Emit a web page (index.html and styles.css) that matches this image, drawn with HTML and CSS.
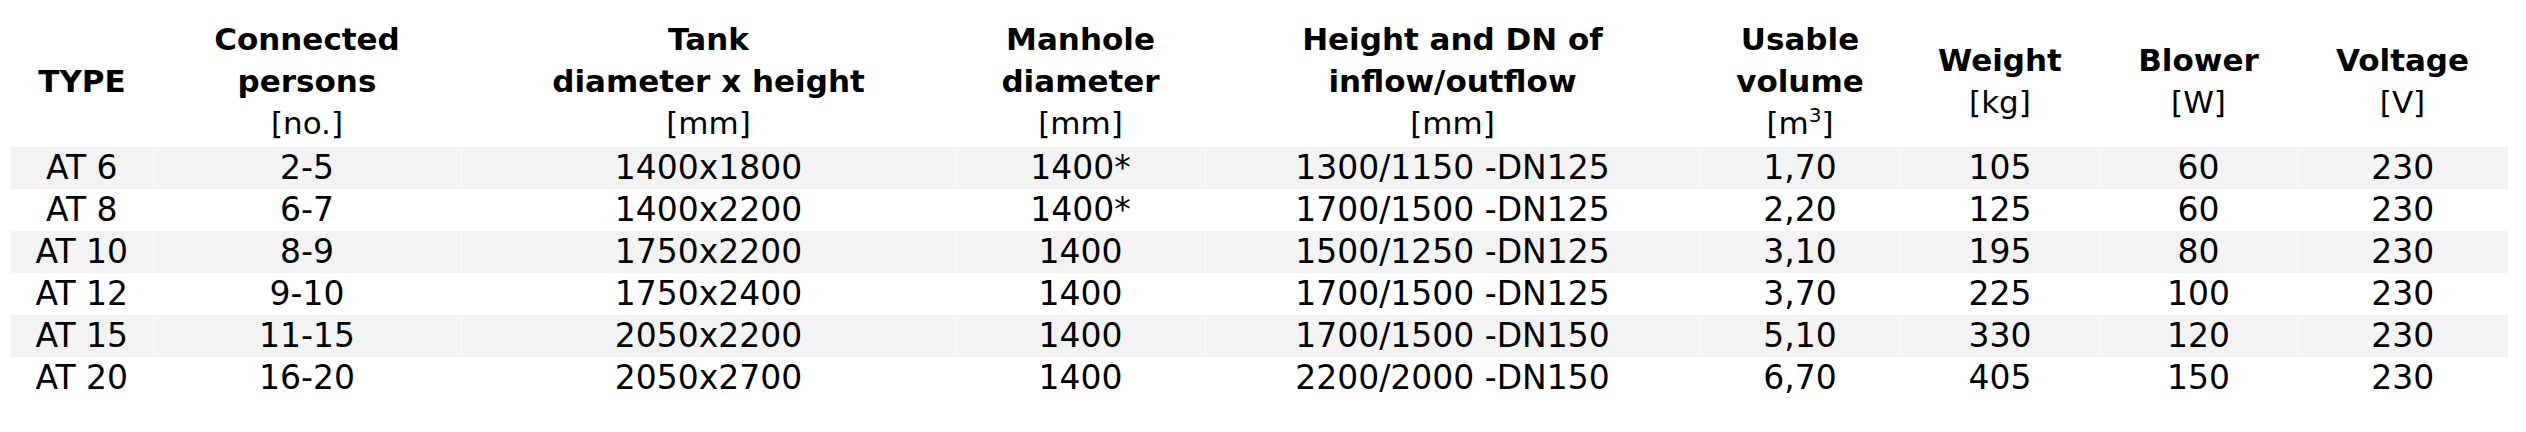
FILE: index.html
```html
<!DOCTYPE html>
<html lang="en">
<head>
<meta charset="utf-8">
<title>AT types</title>
<link rel="stylesheet" href="styles.css">
</head>
<body>
<table class="spec">
  <colgroup>
    <col class="c-type">
    <col class="c-persons">
    <col class="c-tank">
    <col class="c-manhole">
    <col class="c-flow">
    <col class="c-volume">
    <col class="c-weight">
    <col class="c-blower">
    <col class="c-voltage">
  </colgroup>
  <thead>
    <tr>
      <th><b>TYPE</b></th>
      <th><b>Connected<br>persons</b><br><span class="unit">[no.]</span></th>
      <th><b>Tank<br>diameter x height</b><br><span class="unit">[mm]</span></th>
      <th><b>Manhole<br>diameter</b><br><span class="unit">[mm]</span></th>
      <th><b>Height and DN of<br>inflow/outflow</b><br><span class="unit">[mm]</span></th>
      <th><b>Usable<br>volume</b><br><span class="unit">[m<sup class="sup">3</sup>]</span></th>
      <th><b>Weight</b><br><span class="unit">[kg]</span></th>
      <th><b>Blower</b><br><span class="unit">[W]</span></th>
      <th><b>Voltage</b><br><span class="unit">[V]</span></th>
    </tr>
  </thead>
  <tbody>
    <tr><td>AT 6</td><td>2-5</td><td>1400x1800</td><td>1400*</td><td>1300/1150 -DN125</td><td>1,70</td><td>105</td><td>60</td><td>230</td></tr>
    <tr><td>AT 8</td><td>6-7</td><td>1400x2200</td><td>1400*</td><td>1700/1500 -DN125</td><td>2,20</td><td>125</td><td>60</td><td>230</td></tr>
    <tr><td>AT 10</td><td>8-9</td><td>1750x2200</td><td>1400</td><td>1500/1250 -DN125</td><td>3,10</td><td>195</td><td>80</td><td>230</td></tr>
    <tr><td>AT 12</td><td>9-10</td><td>1750x2400</td><td>1400</td><td>1700/1500 -DN125</td><td>3,70</td><td>225</td><td>100</td><td>230</td></tr>
    <tr><td>AT 15</td><td>11-15</td><td>2050x2200</td><td>1400</td><td>1700/1500 -DN150</td><td>5,10</td><td>330</td><td>120</td><td>230</td></tr>
    <tr><td>AT 20</td><td>16-20</td><td>2050x2700</td><td>1400</td><td>2200/2000 -DN150</td><td>6,70</td><td>405</td><td>150</td><td>230</td></tr>
  </tbody>
</table>
</body>
</html>
```
FILE: styles.css
```css
html, body {
  margin: 0;
  padding: 0;
  background: #ffffff;
}

body {
  padding: 18px 0 0 11px;
  font-family: "DejaVu Sans", "Liberation Sans", sans-serif;
  color: #000000;
}

.spec {
  border-collapse: collapse;
  border-spacing: 0;
  table-layout: fixed;
  width: 2497px;
}

.c-type { width: 142px; }
.c-persons { width: 308px; }
.c-tank { width: 495px; }
.c-manhole { width: 249px; }
.c-flow { width: 495px; }
.c-volume { width: 200px; }
.c-weight { width: 200px; }
.c-blower { width: 197px; }
.c-voltage { width: 211px; }

.spec th {
  font-size: 31px;
  line-height: 42px;
  font-weight: normal;
  text-align: center;
  vertical-align: middle;
  padding: 0 0 3px 0;
}

.spec th b {
  font-weight: bold;
}

.unit {
  font-weight: normal;
  font-size: 31px;
}

.sup {
  font-size: 20px;
  line-height: 0;
  vertical-align: 12px;
}

.spec td {
  font-size: 33px;
  line-height: 42px;
  height: 42px;
  padding: 0;
  text-align: center;
  vertical-align: middle;
  border-left: 1px solid rgba(255, 255, 255, 0.6);
}

.spec td:first-child {
  border-left: none;
}

.spec tbody tr:nth-child(odd) {
  background: #f3f3f3;
}
```
